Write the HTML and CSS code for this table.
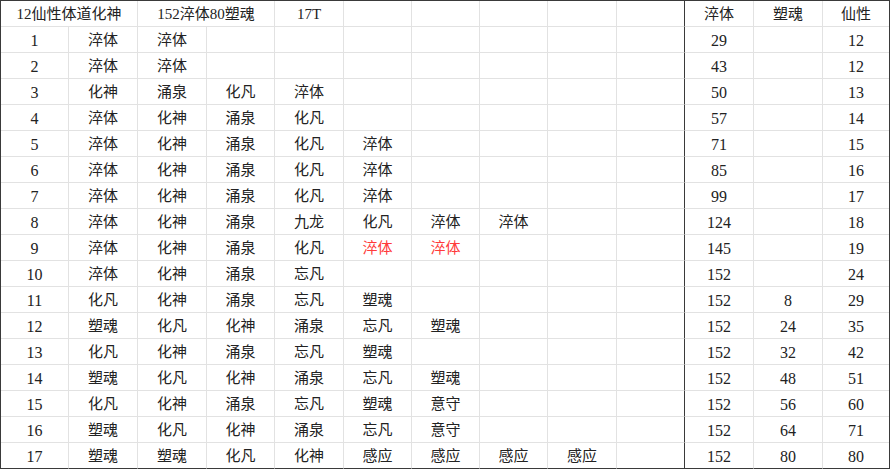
FILE: index.html
```html
<!DOCTYPE html>
<html lang="zh">
<head>
<meta charset="utf-8">
<link rel="stylesheet" href="styles.css">
</head>
<body>
<div class="sheet">
  <div class="c span2">12仙性体道化神</div><div class="c span2">152淬体80塑魂</div><div class="c">17T</div><div class="c"></div><div class="c"></div><div class="c"></div><div class="c"></div><div class="c sep"></div><div class="c">淬体</div><div class="c">塑魂</div><div class="c">仙性</div>

  <div class="c n">1</div><div class="c">淬体</div><div class="c">淬体</div><div class="c"></div><div class="c"></div><div class="c"></div><div class="c"></div><div class="c"></div><div class="c"></div><div class="c sep"></div><div class="c n">29</div><div class="c"></div><div class="c n">12</div>

  <div class="c n">2</div><div class="c">淬体</div><div class="c">淬体</div><div class="c"></div><div class="c"></div><div class="c"></div><div class="c"></div><div class="c"></div><div class="c"></div><div class="c sep"></div><div class="c n">43</div><div class="c"></div><div class="c n">12</div>

  <div class="c n">3</div><div class="c">化神</div><div class="c">涌泉</div><div class="c">化凡</div><div class="c">淬体</div><div class="c"></div><div class="c"></div><div class="c"></div><div class="c"></div><div class="c sep"></div><div class="c n">50</div><div class="c"></div><div class="c n">13</div>

  <div class="c n">4</div><div class="c">淬体</div><div class="c">化神</div><div class="c">涌泉</div><div class="c">化凡</div><div class="c"></div><div class="c"></div><div class="c"></div><div class="c"></div><div class="c sep"></div><div class="c n">57</div><div class="c"></div><div class="c n">14</div>

  <div class="c n">5</div><div class="c">淬体</div><div class="c">化神</div><div class="c">涌泉</div><div class="c">化凡</div><div class="c">淬体</div><div class="c"></div><div class="c"></div><div class="c"></div><div class="c sep"></div><div class="c n">71</div><div class="c"></div><div class="c n">15</div>

  <div class="c n">6</div><div class="c">淬体</div><div class="c">化神</div><div class="c">涌泉</div><div class="c">化凡</div><div class="c">淬体</div><div class="c"></div><div class="c"></div><div class="c"></div><div class="c sep"></div><div class="c n">85</div><div class="c"></div><div class="c n">16</div>

  <div class="c n">7</div><div class="c">淬体</div><div class="c">化神</div><div class="c">涌泉</div><div class="c">化凡</div><div class="c">淬体</div><div class="c"></div><div class="c"></div><div class="c"></div><div class="c sep"></div><div class="c n">99</div><div class="c"></div><div class="c n">17</div>

  <div class="c n">8</div><div class="c">淬体</div><div class="c">化神</div><div class="c">涌泉</div><div class="c">九龙</div><div class="c">化凡</div><div class="c">淬体</div><div class="c">淬体</div><div class="c"></div><div class="c sep"></div><div class="c n">124</div><div class="c"></div><div class="c n">18</div>

  <div class="c n">9</div><div class="c">淬体</div><div class="c">化神</div><div class="c">涌泉</div><div class="c">化凡</div><div class="c red">淬体</div><div class="c red">淬体</div><div class="c"></div><div class="c"></div><div class="c sep"></div><div class="c n">145</div><div class="c"></div><div class="c n">19</div>

  <div class="c n">10</div><div class="c">淬体</div><div class="c">化神</div><div class="c">涌泉</div><div class="c">忘凡</div><div class="c"></div><div class="c"></div><div class="c"></div><div class="c"></div><div class="c sep"></div><div class="c n">152</div><div class="c"></div><div class="c n">24</div>

  <div class="c n">11</div><div class="c">化凡</div><div class="c">化神</div><div class="c">涌泉</div><div class="c">忘凡</div><div class="c">塑魂</div><div class="c"></div><div class="c"></div><div class="c"></div><div class="c sep"></div><div class="c n">152</div><div class="c n">8</div><div class="c n">29</div>

  <div class="c n">12</div><div class="c">塑魂</div><div class="c">化凡</div><div class="c">化神</div><div class="c">涌泉</div><div class="c">忘凡</div><div class="c">塑魂</div><div class="c"></div><div class="c"></div><div class="c sep"></div><div class="c n">152</div><div class="c n">24</div><div class="c n">35</div>

  <div class="c n">13</div><div class="c">化凡</div><div class="c">化神</div><div class="c">涌泉</div><div class="c">忘凡</div><div class="c">塑魂</div><div class="c"></div><div class="c"></div><div class="c"></div><div class="c sep"></div><div class="c n">152</div><div class="c n">32</div><div class="c n">42</div>

  <div class="c n">14</div><div class="c">塑魂</div><div class="c">化凡</div><div class="c">化神</div><div class="c">涌泉</div><div class="c">忘凡</div><div class="c">塑魂</div><div class="c"></div><div class="c"></div><div class="c sep"></div><div class="c n">152</div><div class="c n">48</div><div class="c n">51</div>

  <div class="c n">15</div><div class="c">化凡</div><div class="c">化神</div><div class="c">涌泉</div><div class="c">忘凡</div><div class="c">塑魂</div><div class="c">意守</div><div class="c"></div><div class="c"></div><div class="c sep"></div><div class="c n">152</div><div class="c n">56</div><div class="c n">60</div>

  <div class="c n">16</div><div class="c">塑魂</div><div class="c">化凡</div><div class="c">化神</div><div class="c">涌泉</div><div class="c">忘凡</div><div class="c">意守</div><div class="c"></div><div class="c"></div><div class="c sep"></div><div class="c n">152</div><div class="c n">64</div><div class="c n">71</div>

  <div class="c n">17</div><div class="c">塑魂</div><div class="c">塑魂</div><div class="c">化凡</div><div class="c">化神</div><div class="c">感应</div><div class="c">感应</div><div class="c">感应</div><div class="c">感应</div><div class="c sep"></div><div class="c n">152</div><div class="c n">80</div><div class="c n">80</div>
</div>
</body>
</html>
```

FILE: styles.css
```css
html, body {
  margin: 0;
  padding: 0;
  background: #ffffff;
}

.sheet {
  display: grid;
  grid-template-columns: 68px 69px 69px 68px 69px 68px 68px 68px 69px 68px 69px 69px 66px;
  grid-auto-rows: 26px;
  width: 890px;
  box-sizing: border-box;
  border-left: 1px solid #3a3a3a;
  border-top: 1px solid #3a3a3a;
  border-right: 1px solid #3a3a3a;
  font-family: "Liberation Serif", "Noto Sans CJK SC", serif;
  font-size: 15px;
  color: #222222;
}

.c {
  box-sizing: border-box;
  border-right: 1px solid #e2e2e2;
  border-bottom: 1px solid #e2e2e2;
  padding-top: 2px;
  display: flex;
  align-items: center;
  justify-content: center;
  white-space: nowrap;
  overflow: hidden;
  line-height: 1;
}

.n {
  font-size: 16px;
}

.span2 {
  grid-column: span 2;
}

.sep {
  border-right-color: #3a3a3a;
}

/* last column of every row: the sheet's own right edge draws the line */
.sheet > .c:nth-child(13n + 11) {
  border-right: none;
}

.sheet > .c:nth-last-child(-n + 13) {
  border-bottom-color: #3a3a3a;
}

.red {
  color: #ff3b3b;
}
```
